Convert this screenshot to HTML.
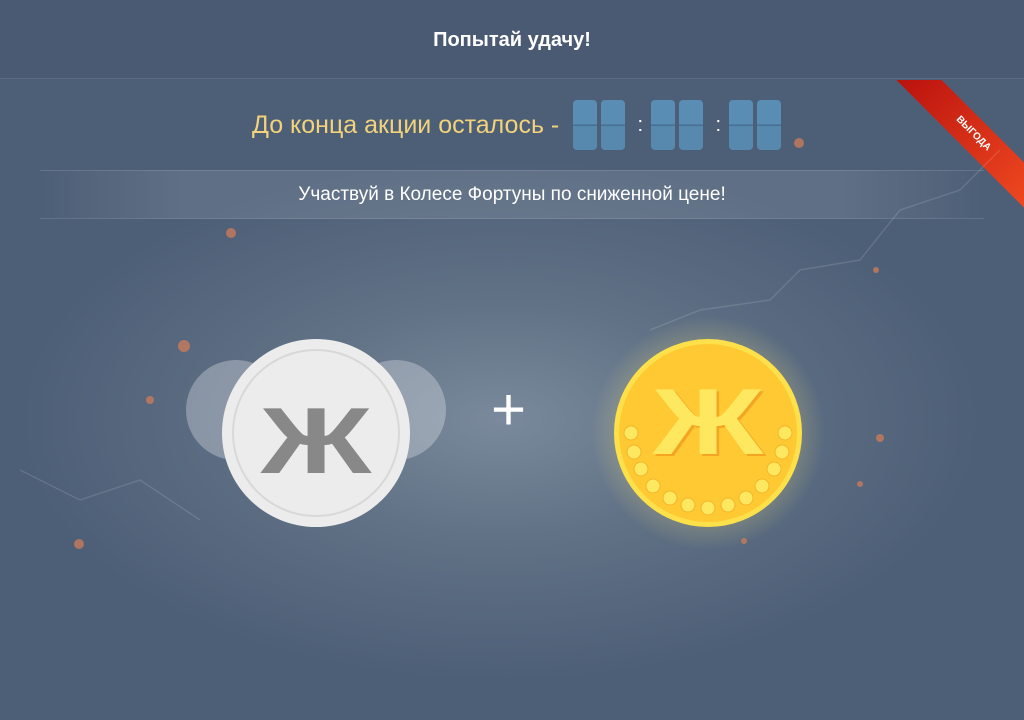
<!DOCTYPE html>
<html><head><meta charset="utf-8"><style>
*{margin:0;padding:0;box-sizing:border-box}
body{width:1024px;height:720px;overflow:hidden;font-family:"Liberation Sans","DejaVu Sans",sans-serif;background:#4b5d76;position:relative}
.hdr{position:absolute;left:0;top:0;width:1024px;height:79px;background:#4a5a73;border-bottom:1px solid #5a6b82;color:#fff;font-weight:bold;font-size:20px;text-align:center;line-height:80px}
.main{position:absolute;left:0;top:80px;width:1024px;height:640px;background:radial-gradient(ellipse 480px 260px at 500px 340px,#7a8a9c 0%,#617286 45%,#4d5f77 100%)}
.timer{position:absolute;top:100px;left:252px;height:50px;display:flex;align-items:center;color:#f2d27a;font-size:25px}
.d{width:24px;height:50px;background:linear-gradient(#5a8db3 0 49%,#466f91 49% 52%,#5789af 52%);border-radius:4px;margin-right:4px}
.c{color:#fff;width:22px;text-align:center;font-size:20px}
.band{position:absolute;top:170px;left:40px;width:944px;height:49px;background:linear-gradient(90deg,rgba(255,255,255,0),rgba(255,255,255,.1) 15%,rgba(255,255,255,.1) 85%,rgba(255,255,255,0));border-top:1px solid rgba(255,255,255,.12);border-bottom:1px solid rgba(255,255,255,.1);color:#fff;font-size:19px;text-align:center;line-height:48px}
.coin{position:absolute;border-radius:50%}
.zh{position:absolute;font-weight:bold;text-align:center;line-height:1}
.rib{position:absolute;left:873px;top:38px;width:200px;height:32px;background:linear-gradient(90deg,#b8100e,#f24c21);transform:rotate(45deg);color:#fff;font-size:10px;font-weight:bold;text-align:center;line-height:32px}
</style></head><body>
<div class="hdr">Попытай удачу!</div>
<div class="main"></div>
<div style="position:absolute;left:0;top:80px;width:1024px;height:640px;overflow:hidden">
<div class="rib">ВЫГОДА</div>
</div>
<div class="timer">До конца акции осталось -<span style="width:14px"></span>
<div class="d"></div><div class="d"></div><div class="c">:</div><div class="d"></div><div class="d"></div><div class="c">:</div><div class="d"></div><div class="d"></div></div>
<div class="band">Участвуй в Колесе Фортуны по сниженной цене!</div>

<div class="coin" style="left:186px;top:360px;width:100px;height:100px;background:rgba(225,230,235,.35)"></div>
<div class="coin" style="left:346px;top:360px;width:100px;height:100px;background:rgba(225,230,235,.35)"></div>
<div class="coin" style="left:222px;top:339px;width:188px;height:188px;background:#ececec"></div>
<div class="coin" style="left:232px;top:349px;width:168px;height:168px;border:2px solid #d8d8d8"></div>
<div class="zh" style="left:246px;top:394px;width:140px;font-size:94px;color:#888;transform:scaleX(1.3)">Ж</div>

<div style="position:absolute;left:491px;top:380px;color:#fff;font-size:60px;line-height:60px">+</div>

<div class="coin" style="left:590px;top:315px;width:236px;height:236px;background:radial-gradient(circle,rgba(255,230,120,.35) 40%,rgba(255,230,120,0) 70%)"></div>
<div class="coin" style="left:614px;top:339px;width:188px;height:188px;background:#ffc933;border:5px solid #fde04a"></div>
<div class="zh" style="left:638px;top:375px;width:140px;font-size:94px;color:#fde860;transform:scaleX(1.3);text-shadow:2px 2px 0 #f4a623">Ж</div>
<svg style="position:absolute;left:0;top:0" width="1024" height="720">
<g fill="#fde860" stroke="#f4b52a" stroke-width="1">
<circle cx="631" cy="433" r="7"/><circle cx="634" cy="452" r="7"/><circle cx="641" cy="469" r="7"/><circle cx="653" cy="486" r="7"/><circle cx="670" cy="498" r="7"/><circle cx="688" cy="505" r="7"/><circle cx="708" cy="508" r="7"/><circle cx="728" cy="505" r="7"/><circle cx="746" cy="498" r="7"/><circle cx="762" cy="486" r="7"/><circle cx="774" cy="469" r="7"/><circle cx="782" cy="452" r="7"/><circle cx="785" cy="433" r="7"/>
</g>
<g fill="#c87a5a" opacity=".8"><circle cx="799" cy="143" r="5"/><circle cx="231" cy="233" r="5"/><circle cx="184" cy="346" r="6"/><circle cx="150" cy="400" r="4"/><circle cx="79" cy="544" r="5"/><circle cx="880" cy="438" r="4"/><circle cx="876" cy="270" r="3"/><circle cx="860" cy="484" r="3"/><circle cx="744" cy="541" r="3"/></g>
<g fill="none" stroke="rgba(255,255,255,.12)" stroke-width="1.5"><path d="M1000 150 L960 190 L900 210 L860 260 L800 270 L770 300 L700 310 L650 330"/><path d="M20 470 L80 500 L140 480 L200 520"/></g>
</svg>
</body></html>
